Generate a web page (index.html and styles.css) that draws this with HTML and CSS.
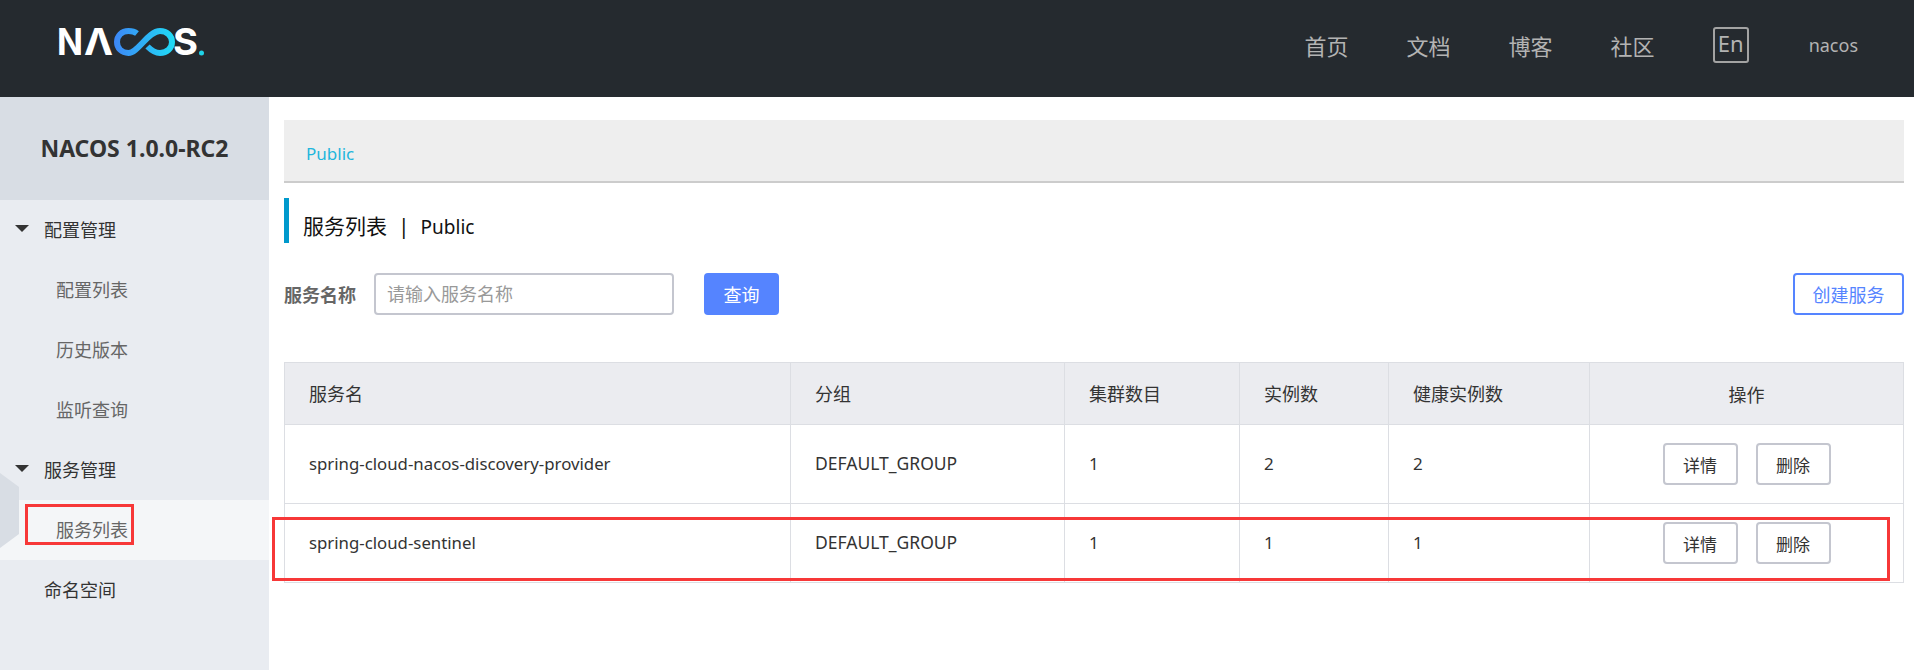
FILE: index.html
```html
<!DOCTYPE html>
<html lang="en">

<head>
    <meta charset="UTF-8">
    <meta name="viewport" content="width=device-width, initial-scale=1.0">
    <title>Nacos</title>
    <link rel="stylesheet" href="styles.css">
</head>

<body>
    <header class="topbar">
        <svg class="logo" viewBox="55 15 150 50" width="150" height="50">
            <defs>
                <linearGradient id="loop" x1="114" y1="0" x2="175" y2="0" gradientUnits="userSpaceOnUse">
                    <stop offset="0" stop-color="#3d86f6"></stop>
                    <stop offset="1" stop-color="#1fdcf6"></stop>
                </linearGradient>
            </defs>
            <text class="logo-text" x="57" y="55" textLength="26" lengthAdjust="spacingAndGlyphs">N</text>
            <text class="logo-text" x="84" y="55" textLength="29" lengthAdjust="spacingAndGlyphs">Λ</text>
            <path d="M137 33.5C134.5 31.5 131.5 31 128.5 31C121.5 31 117 36 117 42C117 48 121.5 53 128.5 53C138 53 148 31 160 31C167 31 172 36 172 42C172 48 167 53 160 53C155.5 53 151.5 50.5 147.5 46.5" fill="none" stroke="url(#loop)" stroke-width="6"></path>
            <text class="logo-text" x="173" y="55" textLength="25" lengthAdjust="spacingAndGlyphs">S</text>
            <circle cx="201.5" cy="53" r="2.5" fill="#1fd3e8"></circle>
        </svg>
        <nav class="topnav">
            <a>首页</a>
            <a>文档</a>
            <a>博客</a>
            <a>社区</a>
            <span class="lang">En</span>
            <span class="user">nacos</span>
        </nav>
    </header>

    <div class="main">
        <aside class="sidebar">
            <div class="version">NACOS 1.0.0-RC2</div>
            <div class="menu-group"><i class="arrow"></i>配置管理</div>
            <div class="menu-item">配置列表</div>
            <div class="menu-item">历史版本</div>
            <div class="menu-item">监听查询</div>
            <div class="menu-group"><i class="arrow"></i>服务管理</div>
            <div class="menu-item active">服务列表</div>
            <div class="menu-top">命名空间</div>
            <svg class="tab-mark" viewBox="0 0 19 75" width="19" height="75">
                <polygon points="0,0 19,14 19,61 0,75" fill="#d8dde4"></polygon>
            </svg>
            <div class="mark mark-menu"></div>
        </aside>

        <section class="content">
            <div class="crumb"><a>Public</a></div>
            <h2 class="page-title">服务列表<span class="sep">|</span><span class="title-ns">Public</span></h2>

            <div class="search">
                <label class="search-label">服务名称</label>
                <input class="search-input" type="text" placeholder="请输入服务名称">
                <button class="btn btn-primary">查询</button>
                <button class="btn btn-outline">创建服务</button>
            </div>

            <table class="list">
                <colgroup>
                    <col class="c1">
                    <col class="c2">
                    <col class="c3">
                    <col class="c4">
                    <col class="c5">
                    <col class="c6">
                </colgroup>
                <thead>
                    <tr>
                        <th>服务名</th>
                        <th>分组</th>
                        <th>集群数目</th>
                        <th>实例数</th>
                        <th>健康实例数</th>
                        <th class="ops">操作</th>
                    </tr>
                </thead>
                <tbody>
                    <tr>
                        <td class="name">spring-cloud-nacos-discovery-provider</td>
                        <td class="group">DEFAULT_GROUP</td>
                        <td>1</td>
                        <td>2</td>
                        <td>2</td>
                        <td class="ops"><button class="btn btn-small">详情</button><button class="btn btn-small">删除</button></td>
                    </tr>
                    <tr>
                        <td class="name">spring-cloud-sentinel</td>
                        <td class="group">DEFAULT_GROUP</td>
                        <td>1</td>
                        <td>1</td>
                        <td>1</td>
                        <td class="ops"><button class="btn btn-small">详情</button><button class="btn btn-small">删除</button></td>
                    </tr>
                </tbody>
            </table>
            <div class="mark mark-row"></div>
        </section>
    </div>
</body>

</html>
```

FILE: styles.css
```css
* {
    box-sizing: border-box;
}

html,
body {
    margin: 0;
    height: 670px;
    overflow: hidden;
}

body {
    font-family: "Noto Sans", "Noto Sans CJK SC", sans-serif;
    font-size: 18px;
    color: #333;
    background: #fff;
}

.topbar {
    height: 97px;
    background: #252a2f;
    display: flex;
    align-items: center;
    justify-content: space-between;
    padding: 0 56px 0 55px;
}

.logo {
    display: block;
    margin-top: -17px;
}

.logo-text {
    font-family: Inter, sans-serif;
    font-size: 37px;
    font-weight: 700;
    fill: #fff;
}

.topnav {
    display: flex;
    align-items: center;
    margin-top: -7px;
    color: #b3b3b3;
    font-size: 22px;
}

.topnav a {
    margin-right: 58px;
}

.lang {
    width: 36px;
    height: 36px;
    margin-right: 60px;
    border: 2px solid #a3a3a3;
    border-radius: 3px;
    font-size: 22px;
    line-height: 29px;
    text-align: center;
}

.user {
    font-size: 18px;
}

.main {
    display: flex;
    height: 573px;
}

.sidebar {
    position: relative;
    width: 269px;
    flex: none;
    background: #e9ecf1;
}

.version {
    height: 103px;
    background: #d8dde4;
    font-size: 23px;
    font-weight: 700;
    line-height: 103px;
    text-align: center;
}

.menu-group,
.menu-top {
    position: relative;
    height: 60px;
    line-height: 61px;
    padding-left: 44px;
}

.menu-item {
    height: 60px;
    line-height: 61px;
    padding-left: 56px;
    color: #666;
}

.menu-item.active {
    background: #f4f6f8;
}

.arrow {
    position: absolute;
    left: 15px;
    top: 25px;
    border-left: 7px solid transparent;
    border-right: 7px solid transparent;
    border-top: 7px solid #333;
}

.tab-mark {
    position: absolute;
    left: 0;
    top: 376px;
}

.mark {
    position: absolute;
    border: 3px solid #f73838;
}

.mark-menu {
    left: 25px;
    top: 407px;
    width: 109px;
    height: 41px;
}

.content {
    position: relative;
    flex: 1;
    padding: 23px 11px 0 15px;
}

.crumb {
    height: 63px;
    padding: 22px 22px 0;
    background: #eee;
    border-bottom: 2px solid #ccc;
    color: #1fb6dc;
    font-size: 17px;
}

.page-title {
    height: 45px;
    margin: 15px 0 0;
    padding-left: 14px;
    border-left: 5px solid #09c;
    color: #111;
    font-size: 21px;
    font-weight: 400;
    line-height: 57px;
}

.sep {
    margin: 0 11px;
}

.title-ns {
    font-size: 19px;
}

.search {
    display: flex;
    align-items: center;
    margin-top: 30px;
    height: 42px;
}

.search-label {
    width: 90px;
    color: #666;
    font-weight: 700;
}

.search-input {
    width: 300px;
    height: 42px;
    padding: 0 11px;
    margin-right: 30px;
    border: 2px solid #c4c6cf;
    border-radius: 4px;
    font: inherit;
    outline: none;
}

.search-input::placeholder {
    color: #999;
}

.btn {
    font: inherit;
    border-radius: 4px;
    background: #fff;
    cursor: pointer;
}

.btn-primary {
    width: 75px;
    height: 42px;
    border: 0;
    background: #5584ff;
    color: #fff;
}

.btn-outline {
    width: 111px;
    height: 42px;
    margin-left: auto;
    border: 2px solid #5584ff;
    color: #5584ff;
}

.btn-small {
    width: 75px;
    height: 42px;
    border: 2px solid #c4c6cf;
    color: #333;
}

.btn-small + .btn-small {
    margin-left: 18px;
}

.list {
    width: 1619px;
    margin-top: 47px;
    border-collapse: collapse;
    table-layout: fixed;
}

.c1 {
    width: 506px;
}

.c2 {
    width: 274px;
}

.c3 {
    width: 175px;
}

.c4 {
    width: 149px;
}

.c5 {
    width: 201px;
}

.c6 {
    width: 314px;
}

.list th,
.list td {
    padding: 0 0 2px 24px;
    border: 1px solid #dcdee3;
    font-weight: 400;
    text-align: left;
}

.list td {
    height: 79px;
    font-size: 17px;
}

.list td.name {
    font-size: 16.8px;
}

.list td.group {
    font-size: 17.5px;
}

.list th {
    height: 62px;
    background: #ebecf0;
}

.list .ops {
    padding: 0;
    text-align: center;
}

.mark-row {
    left: 3px;
    top: 420px;
    width: 1618px;
    height: 64px;
}
```
